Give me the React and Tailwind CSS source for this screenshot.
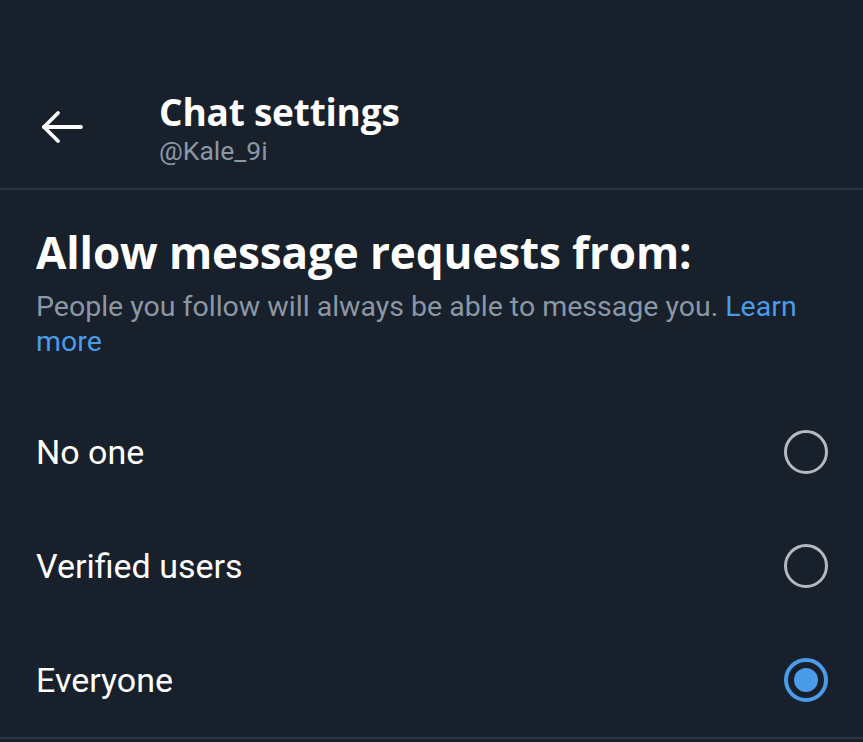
const options = [
  { label: 'No one', selected: false },
  { label: 'Verified users', selected: false },
  { label: 'Everyone', selected: true },
]

function Radio({ selected }) {
  if (selected) {
    return (
      <span className="flex h-[44px] w-[44px] items-center justify-center rounded-full border-[4px] border-[#4a9be8]">
        <span className="h-[24px] w-[24px] rounded-full bg-[#4a9be8]" />
      </span>
    )
  }
  return <span className="h-[44px] w-[44px] rounded-full border-[3px] border-[#b3b9c0]" />
}

function BackArrow() {
  return (
    <svg width="44" height="34" viewBox="0 0 44 34" fill="none" stroke="currentColor" strokeWidth="3.8" strokeLinecap="round" strokeLinejoin="round">
      <path d="M41 17H4" />
      <path d="M18 3 4 17l14 14" />
    </svg>
  )
}

export default function App() {
  return (
    <div
      className="h-[742px] w-[863px] overflow-hidden bg-[#18202b] text-white"
      style={{ fontFamily: 'Roboto, "Noto Sans", sans-serif' }}
    >
      <header className="flex items-center border-b-2 border-[#2b343f] pt-[90px] pb-[20px]">
        <div className="flex w-[159px] justify-start pl-[40px] pb-[4px]">
          <BackArrow />
        </div>
        <div className="flex flex-col">
          <h1 className="font-['Open_Sans',sans-serif] text-[37px] font-bold leading-[44px] tracking-[-0.2px]">
            Chat settings
          </h1>
          <p className="text-[26.5px] leading-[34px] text-[#8b97a4]">@Kale_9i</p>
        </div>
      </header>

      <section className="px-[36px] pt-[36px]">
        <h2 className="font-['Open_Sans',sans-serif] text-[44px] font-bold leading-[52px] tracking-[-0.1px]">
          Allow message requests from:
        </h2>
        <p className="mt-[11px] pr-[30px] text-[28.5px] leading-[35px] text-[#8b97a4]">
          People you follow will always be able to message you.{' '}
          <span className="text-[#4a9be8]">Learn more</span>
        </p>
      </section>

      <ul className="mt-[36px] border-b-2 border-[#2b343f]">
        {options.map((opt) => (
          <li key={opt.label} className="flex h-[114px] items-center justify-between pl-[36px] pr-[35px]">
            <span className="text-[34px] leading-[40px]">{opt.label}</span>
            <Radio selected={opt.selected} />
          </li>
        ))}
      </ul>
    </div>
  )
}
